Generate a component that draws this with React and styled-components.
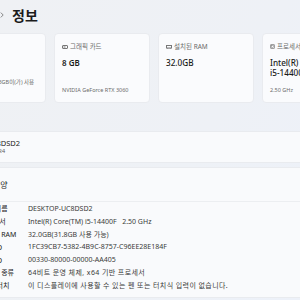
import React from 'react'
import styled, { createGlobalStyle } from 'styled-components'

const GlobalStyle = createGlobalStyle`
  html, body {
    margin: 0;
    width: 300px;
    height: 300px;
    overflow: hidden;
    background: linear-gradient(120deg, #eff1f4 0%, #eef1f6 60%, #edf1f9 100%);
    font-family: "Noto Sans", "Noto Sans CJK KR", sans-serif;
    color: #1b1b1b;
  }
`

const Content = styled.main`
  margin-left: -50px;
  width: 420px;
`

const Header = styled.header`
  display: flex;
  align-items: center;
  height: 30px;
  margin-bottom: 3px;
`

const Crumb = styled.span`
  display: flex;
  justify-content: flex-end;
  width: 42px;
  margin-right: 8px;
  font-size: 14px;
  color: #5f5f5f;
  white-space: nowrap;
`

const Chevron = styled.svg`
  width: 4px;
  height: 6px;
  margin-right: 8px;
`

const Title = styled.h1`
  margin: 0;
  font-size: 14px;
  font-weight: 600;
  color: #1b1b1b;
`

const CardRow = styled.section`
  display: grid;
  grid-template-columns: repeat(4, 96px);
  gap: 8px;
`

const Card = styled.div`
  display: flex;
  flex-direction: column;
  height: 70px;
  box-sizing: border-box;
  padding: 9px 7px ${p => p.$bottom || 8}px;
  background: #fafbfd;
  border: 1px solid #e9ebef;
  border-radius: 4px;
`

const CardLabel = styled.div`
  display: flex;
  align-items: center;
  gap: 2px;
  font-size: 6.5px;
  line-height: 7px;
  color: #6b6b6b;
  white-space: nowrap;
`

const CardValue = styled.div`
  margin-top: 8px;
  font-size: ${p => (p.$light ? 8.2 : 8)}px;
  line-height: 10px;
  font-weight: ${p => (p.$light ? 500 : 600)};
  color: #1b1b1b;
  white-space: nowrap;
`

const CardNote = styled.div`
  margin-top: auto;
  font-size: 5.5px;
  line-height: 7px;
  color: #6b6b6b;
  white-space: nowrap;
`

const Panel = styled.section`
  margin-top: ${p => p.$gap}px;
  background: #f9fafc;
  border: 1px solid #e9ebef;
  border-radius: 4px;
`

const DevicePanel = styled(Panel)`
  height: 32px;
  box-sizing: border-box;
  display: flex;
  flex-direction: column;
  justify-content: center;
`

const DeviceName = styled.div`
  font-size: 7.5px;
  line-height: 9px;
  color: #1b1b1b;
`

const DeviceModel = styled.div`
  font-size: 6px;
  line-height: 7px;
  color: #5f5f5f;
`

const SpecHeader = styled.div`
  display: flex;
  align-items: center;
  height: 33px;
  padding-left: 25px;
  border-bottom: 1px solid #eceef1;
  font-size: 8px;
  color: #1b1b1b;
`

const SpecList = styled.dl`
  display: grid;
  grid-template-columns: 48px 1fr;
  grid-auto-rows: 12.8px;
  align-items: center;
  margin: 0;
  padding: 0 0 5px 29px;
  font-size: 7px;
`

const SpecLabel = styled.dt`
  color: #1b1b1b;
  white-space: nowrap;
`

const SpecValue = styled.dd`
  margin: 0;
  color: #3a3a3a;
  white-space: pre;
  letter-spacing: ${p => (p.$wide ? '0.4px' : 'normal')};
`

const GpuIcon = () => (
  <svg width="6" height="4" viewBox="0 0 6 4">
    <rect x="0.5" y="0.5" width="5" height="3" rx="0.5" fill="none" stroke="#777" />
    <rect x="1.5" y="1.5" width="2" height="1" fill="#777" />
  </svg>
)

const RamIcon = () => (
  <svg width="6" height="4" viewBox="0 0 6 4">
    <rect x="0.5" y="0.5" width="5" height="2.5" fill="none" stroke="#777" />
    <path d="M1.5 3v1M3 3v1M4.5 3v1" stroke="#777" strokeWidth="0.6" />
  </svg>
)

const CpuIcon = () => (
  <svg width="5" height="5" viewBox="0 0 5 5">
    <rect x="0.5" y="0.5" width="4" height="4" rx="0.6" fill="none" stroke="#777" strokeWidth="0.7" />
    <rect x="1.7" y="1.7" width="1.6" height="1.6" fill="none" stroke="#777" strokeWidth="0.5" />
  </svg>
)

const DiskIcon = () => (
  <svg width="6" height="4" viewBox="0 0 6 4">
    <rect x="0.5" y="0.5" width="5" height="3" rx="0.6" fill="none" stroke="#777" />
  </svg>
)

// third field: korean sentence, rendered a little wider
const specs = [
  ['장치 이름', 'DESKTOP-UC8DSD2'],
  ['프로세서', 'Intel(R) Core(TM) i5-14400F   2.50 GHz'],
  ['설치된 RAM', '32.0GB(31.8GB 사용 가능)'],
  ['장치 ID', '1FC39CB7-5382-4B9C-8757-C96EE28E184F'],
  ['제품 ID', '00330-80000-00000-AA405'],
  ['시스템 종류', '64비트 운영 체제, x64 기반 프로세서', true],
  ['펜 및 터치', '이 디스플레이에 사용할 수 있는 펜 또는 터치식 입력이 없습니다.', true],
]

export default function App() {
  return (
    <>
      <GlobalStyle />
      <Content>
        <Header>
          <Crumb>시스템</Crumb>
          <Chevron viewBox="0 0 4 6">
            <path d="M0.8 0.6L3.2 3L0.8 5.4" fill="none" stroke="#6b6b6b" strokeWidth="0.8" />
          </Chevron>
          <Title>정보</Title>
        </Header>

        <CardRow>
          <Card $bottom={16}>
            <CardLabel><DiskIcon />저장소</CardLabel>
            <CardValue>953 GB</CardValue>
            <CardNote>953 GB 중 312.53GB이(가) 사용</CardNote>
          </Card>
          <Card>
            <CardLabel><GpuIcon />그래픽 카드</CardLabel>
            <CardValue>8 GB</CardValue>
            <CardNote>NVIDIA GeForce RTX 3060</CardNote>
          </Card>
          <Card>
            <CardLabel><RamIcon />설치된 RAM</CardLabel>
            <CardValue $light>32.0GB</CardValue>
          </Card>
          <Card>
            <CardLabel><CpuIcon />프로세서</CardLabel>
            <CardValue $light>
              Intel(R) Core(TM)
              <br />
              i5-14400F
            </CardValue>
            <CardNote>2.50 GHz</CardNote>
          </Card>
        </CardRow>

        <DevicePanel $gap={28}>
          <DeviceName>DESKTOP-UC8DSD2</DeviceName>
          <DeviceModel>B760M DS3H DDR4</DeviceModel>
        </DevicePanel>

        <Panel $gap={4}>
          <SpecHeader>장치 사양</SpecHeader>
          <SpecList>
            {specs.map(([label, value, wide]) => (
              <React.Fragment key={label}>
                <SpecLabel>{label}</SpecLabel>
                <SpecValue $wide={wide}>{value}</SpecValue>
              </React.Fragment>
            ))}
          </SpecList>
        </Panel>
      </Content>
    </>
  )
}
